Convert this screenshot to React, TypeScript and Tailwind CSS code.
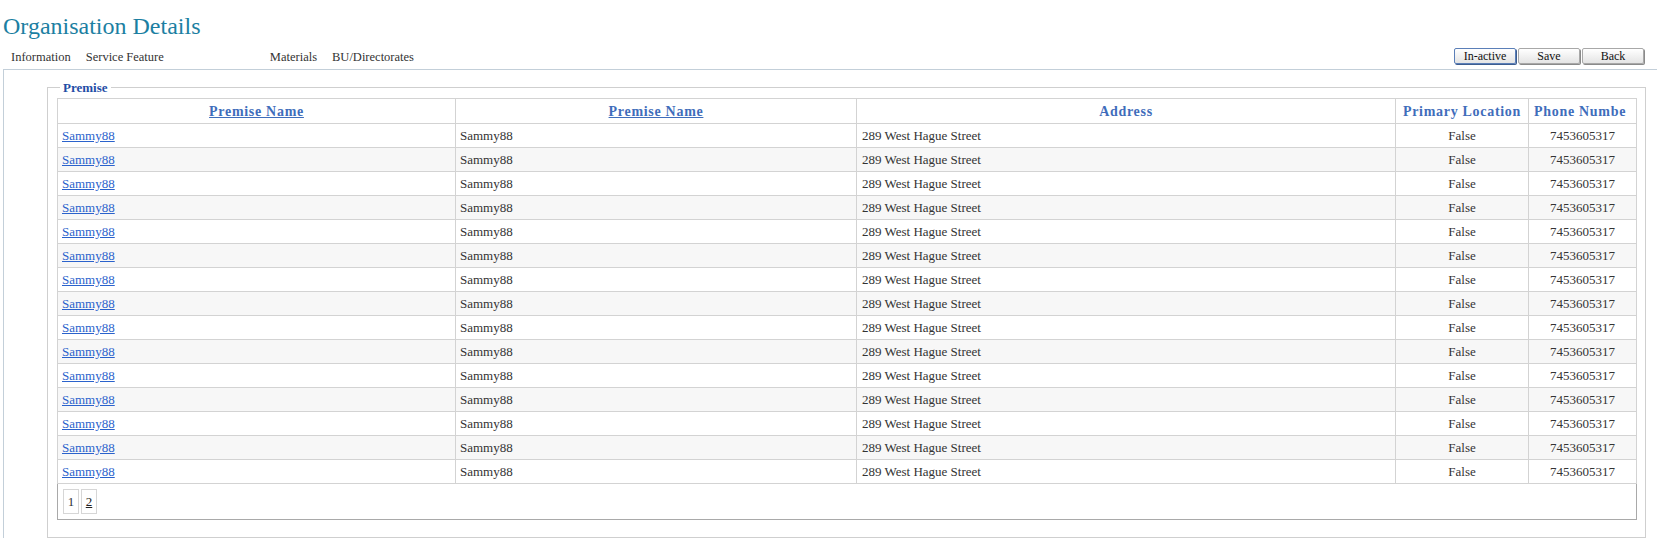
import React from 'react';

const rows = Array.from({ length: 15 }, (_, i) => ({
  id: i,
  name: 'Sammy88',
  alias: 'Sammy88',
  address: '289 West Hague Street',
  primary: 'False',
  phone: '7453605317',
}));

const tabs = [
  { label: 'Information', className: 'ml-[11px]' },
  { label: 'Service Feature', className: 'ml-[15px]' },
  { label: 'Materials', className: 'ml-[106px]' },
  { label: 'BU/Directorates', className: 'ml-[15px]' },
];

const Button: React.FC<{ label: string; active?: boolean }> = ({ label, active }) => (
  <button
    type="button"
    className={`h-[16px] w-[62px] rounded-[2px] border bg-gradient-to-b from-white to-[#e4e4e4] text-[12px] leading-[14px] text-[#111] ${
      active ? 'border-[#5b7fb8] shadow-[1px_1px_0_#3d5d8f]' : 'border-[#a8a8a8] shadow-[1px_1px_0_#8a8a8a]'
    }`}
  >
    {label}
  </button>
);

export default function App() {
  return (
    <div className="min-h-[546px] w-[1657px] bg-white font-['Liberation_Serif',serif] text-[#333]">
      <h1 className="pl-[3px] pt-[12px] text-[24px] leading-[28px] text-[#1c7fa2]">Organisation Details</h1>

      <div className="mt-[8px] flex h-[21px] items-start justify-between pr-[13px]">
        <div className="flex pt-[2px] text-[12.5px] leading-[14px] text-[#333]">
          {tabs.map(t => (
            <span key={t.label} className={t.className}>
              {t.label}
            </span>
          ))}
        </div>
        <div className="flex gap-[2px]">
          <Button label="In-active" active />
          <Button label="Save" />
          <Button label="Back" />
        </div>
      </div>

      <div className="ml-[3px] border-l border-t border-[#c3cfd9] pt-[10px]">
        <fieldset className="ml-[43px] mr-[11px] border border-[#cfcfcf] pb-[17px] pl-[9px] pr-[8px] pt-[3px]">
          <legend className="ml-[3px] px-[3px] text-[13px] font-bold leading-[15px] text-[#1f4ea6]">Premise</legend>

          <table className="w-[1579px] table-fixed border-collapse border border-[#a9a9a9] text-[13px]">
            <colgroup>
              <col className="w-[398px]" />
              <col className="w-[401px]" />
              <col className="w-[539px]" />
              <col className="w-[133px]" />
              <col className="w-[108px]" />
            </colgroup>
            <thead>
              <tr className="h-[25px] text-[14px] font-bold tracking-[0.7px] text-[#3f6dbb]">
                <th className="border border-[#d3d3d3] px-[6px]">
                  <span className="underline">Premise Name</span>
                </th>
                <th className="border border-[#d3d3d3] px-[6px]">
                  <span className="underline">Premise Name</span>
                </th>
                <th className="border border-[#d3d3d3] px-[6px]">Address</th>
                <th className="overflow-hidden whitespace-nowrap border border-[#d3d3d3] px-[4px]">Primary Location</th>
                <th className="overflow-hidden whitespace-nowrap border border-[#d3d3d3] pl-[5px] text-left">Phone Numbe</th>
              </tr>
            </thead>
            <tbody>
              {rows.map((r, i) => (
                <tr key={r.id} className={`h-[24px] ${i % 2 === 1 ? 'bg-[#f7f7f7]' : 'bg-white'}`}>
                  <td className="border border-[#d3d3d3] px-[4px]">
                    <a href="#" className="text-[#2a62cc] underline">
                      {r.name}
                    </a>
                  </td>
                  <td className="border border-[#d3d3d3] px-[4px]">{r.alias}</td>
                  <td className="border border-[#d3d3d3] px-[5px]">{r.address}</td>
                  <td className="border border-[#d3d3d3] px-[4px] text-center">{r.primary}</td>
                  <td className="border border-[#d3d3d3] px-[4px] text-center">{r.phone}</td>
                </tr>
              ))}
              <tr className="h-[36px]">
                <td colSpan={5} className="border border-[#a9a9a9] px-[5px]">
                  <div className="flex gap-[2px]">
                    <span className="flex h-[25px] w-[16px] items-center justify-center border border-[#d6d6d6] text-[13px] text-[#333]">1</span>
                    <a href="#" className="flex h-[25px] w-[16px] items-center justify-center border border-[#d6d6d6] text-[13px] text-[#222] underline">
                      2
                    </a>
                  </div>
                </td>
              </tr>
            </tbody>
          </table>
        </fieldset>
      </div>
    </div>
  );
}
